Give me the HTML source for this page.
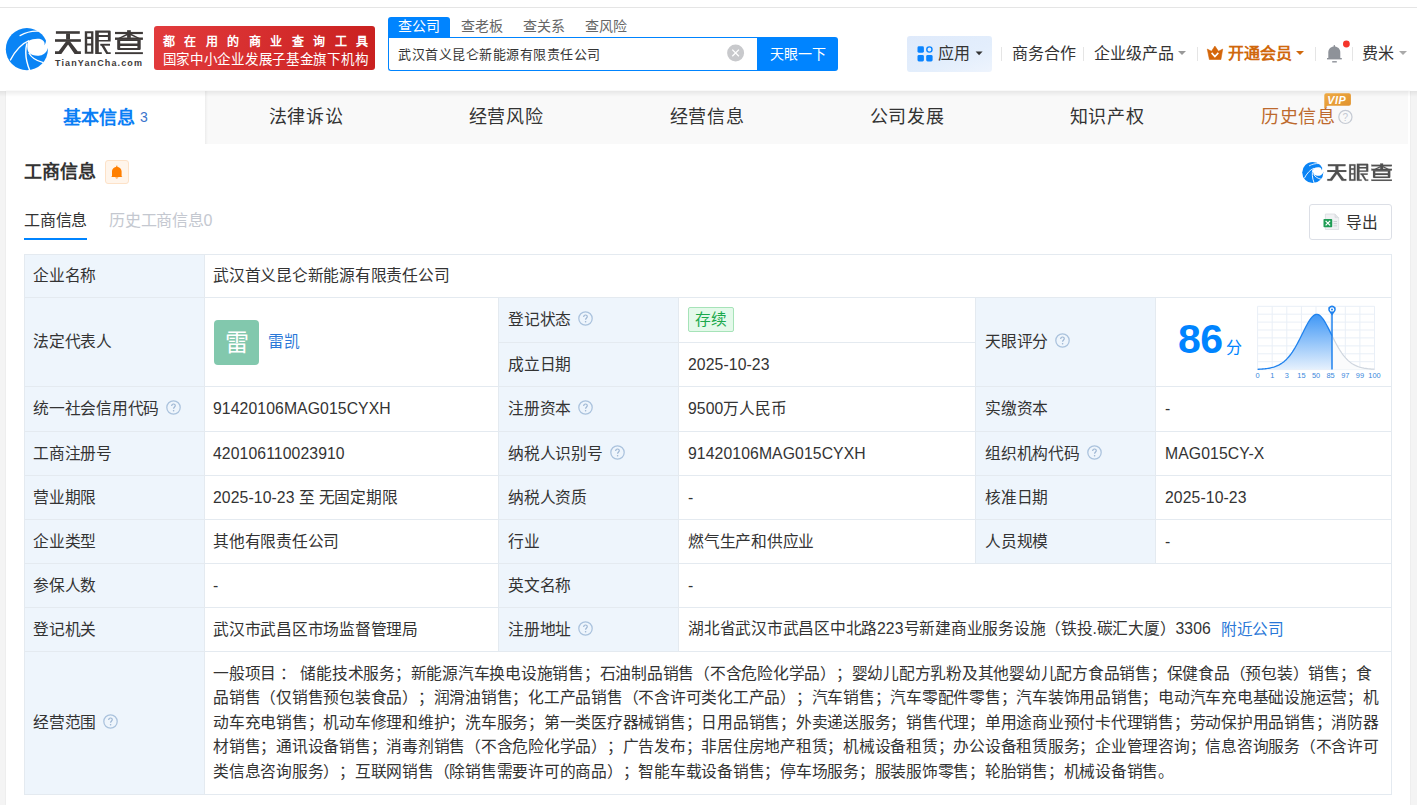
<!DOCTYPE html>
<html lang="zh-CN">
<head>
<meta charset="utf-8">
<style>
*{margin:0;padding:0;box-sizing:border-box;}
html,body{width:1417px;height:805px;overflow:hidden;}
body{background:#f4f4f4;font-family:"Liberation Sans",sans-serif;color:#333;position:relative;text-spacing-trim:space-all;}
.abs{position:absolute;}
.topstrip{left:0;top:0;width:1417px;height:7px;background:#fff;}
.topline{left:0;top:7px;width:1417px;height:1px;background:#e5e5e5;}
.header{left:0;top:8px;width:1417px;height:83px;background:#fff;}
.card{left:6px;top:91px;width:1404px;height:714px;background:#fff;box-shadow:0 0 1.5px rgba(0,0,0,0.10);}
.hshadow{left:0;top:91px;width:1417px;height:6px;background:linear-gradient(rgba(0,0,0,0.07),rgba(0,0,0,0));}
.vshadow{left:205px;top:91px;width:3px;height:53px;background:linear-gradient(90deg,rgba(0,0,0,0.05),rgba(0,0,0,0));}

.logo{left:6px;top:28px;width:42px;height:42px;}
.logotxt{left:54px;top:30px;width:90px;height:38px;}
.banner{left:154px;top:26px;width:221px;height:44px;border-radius:3px;background:linear-gradient(100deg,#e23b3d,#c9201f);color:#fff;}
.banner .l1{position:absolute;left:9px;top:8.5px;font-size:12px;line-height:14px;font-weight:bold;letter-spacing:9.45px;white-space:nowrap;}
.banner .l2{position:absolute;left:8.5px;top:25.5px;font-size:13.5px;line-height:16px;white-space:nowrap;letter-spacing:0.72px;}
.stab{top:17px;height:20px;font-size:14px;line-height:18px;color:#666;white-space:nowrap;}
.stab.on{left:388px;width:62px;background:#0084ff;color:#fff;border-radius:3px 3px 0 0;text-align:center;}
.search{left:388px;top:37px;width:370px;height:34px;border:1px solid #0084ff;border-right:none;border-radius:0 0 0 3px;background:#fff;}
.search .q{position:absolute;left:9px;top:8px;font-size:13px;letter-spacing:0.5px;line-height:18px;color:#333;white-space:nowrap;}
.clear{left:727px;top:44px;width:17px;height:17px;border-radius:50%;background:#c8c9cc;}
.sbtn{left:757px;top:37px;width:81px;height:34px;background:#0084ff;border-radius:0 3px 3px 0;color:#fff;font-size:14px;line-height:34px;text-align:center;}
.appbtn{left:907px;top:36px;width:85px;height:36px;background:linear-gradient(160deg,#dfeafb 0%,#e3eefc 60%,#eef4fd 100%);border-radius:3px;}
.nav{font-size:16px;line-height:20px;color:#333;white-space:nowrap;top:44px;}
.sep{width:1px;height:14px;top:47px;background:#e5e5e5;}
.tri{width:0;height:0;border-left:4px solid transparent;border-right:4px solid transparent;border-top:4px solid #999;}

.tabs{left:6px;top:91px;width:1402px;height:53px;background:#f9f9f9;}
.tab{top:91px;height:53px;width:200px;font-size:18px;line-height:53px;text-align:center;color:#333;white-space:nowrap;letter-spacing:0.6px;}
.tab.on{left:6px;width:199px;background:#fff;color:#0a7ef5;font-weight:bold;}
.h2{left:24px;top:160px;font-size:18px;line-height:24px;font-weight:bold;color:#333;white-space:nowrap;}
.bellbox{left:105px;top:160px;width:24px;height:24px;background:#fff5eb;border:1px solid #fde2c8;border-radius:3px;}
.subtab{top:210px;font-size:16px;line-height:22px;white-space:nowrap;letter-spacing:-0.25px;}
.subline{left:24px;top:238px;width:63px;height:2px;background:#0084ff;}
.expbtn{left:1309px;top:204px;width:83px;height:36px;border:1px solid #dcdfe6;border-radius:3px;background:#fff;}
.exptxt{left:1345.5px;top:212px;font-size:15.75px;line-height:22px;color:#333;white-space:nowrap;}
table.info{position:absolute;left:24px;top:254px;width:1367px;border-collapse:collapse;table-layout:fixed;}
table.info td{border:1px solid #e4eaf0;font-size:15.75px;letter-spacing:-0.25px;line-height:22px;color:#333;padding:0 9px 0 8px;vertical-align:middle;white-space:nowrap;}
table.info td.k{background:#eef5fc;}
table.info td.r{padding-left:9px;}
.qm{display:inline-block;width:15px;height:15px;vertical-align:-1px;margin-left:7px;}

.avatar{display:inline-block;width:45px;height:45px;border-radius:4px;background:#82c8ad;color:#fff;font-size:24px;line-height:45px;text-align:center;vertical-align:middle;}
.lnk{color:#2a78d8;}
.lat{letter-spacing:0.1px;}
td .lnk{margin-left:9px;vertical-align:middle;}
.avatar{margin-left:1px;}
.tag{display:inline-block;height:25px;padding:0 6px;background:#e4f9ea;border:1px solid #a6e3b8;color:#1ba94c;border-radius:2px;font-size:15.75px;line-height:23px;position:relative;top:-1px;}
td.scope div{line-height:24.6px;}
.score{left:1178px;top:317px;font-size:41px;line-height:44px;font-weight:bold;color:#0084ff;white-space:nowrap;letter-spacing:-0.5px;}
.score span{font-size:16px;font-weight:normal;margin-left:3px;letter-spacing:0;}
</style>
</head>
<body>
<div class="abs topstrip"></div>
<div class="abs topline"></div>
<div class="abs header"></div>
<div class="abs card"></div>

<svg class="abs" style="left:5px;top:27px;width:44px;height:44px" viewBox="0 0 805 805">
  <circle cx="400" cy="405" r="385" fill="#0a84f5"/>
  <path d="M425,258 C520,212 650,196 705,255 C728,282 730,312 716,336 C740,312 752,275 748,228 L830,228 L830,378 L787,378 C770,450 720,508 640,522 C560,534 482,512 440,470 C398,420 400,320 425,258 Z" fill="#fff"/>
  <path d="M275,158 C380,100 500,70 610,78" stroke="#fff" stroke-width="22" fill="none" stroke-linecap="round"/>
  <path d="M95,610 C180,450 290,310 440,250" stroke="#fff" stroke-width="24" fill="none"/>
  <path d="M400,300 C370,420 370,600 455,800" stroke="#fff" stroke-width="26" fill="none"/>
  <path d="M435,470 C480,560 580,620 700,650" stroke="#fff" stroke-width="24" fill="none"/>
</svg>
<svg class="abs" style="left:48px;top:24px;width:100px;height:50px" viewBox="48 24 100 50">
<g fill="#3e3a39">
<rect x="55.9" y="31.2" width="23.9" height="2.6"/>
<rect x="55" y="39.2" width="25.9" height="2.6"/>
<rect x="66.1" y="33.5" width="3.9" height="6"/>
<polygon points="66,41.6 70.3,41.6 61.3,53.9 55,53.9 55,51.3 58.7,51.3"/>
<polygon points="66,41.6 70.1,41.6 77.7,51.3 80.9,51.3 80.9,53.9 74.6,53.9"/>
<path d="M84.8,31.2 H93.4 V53.7 H84.8 Z M87.2,33.2 V36.8 H91.1 V33.2 Z M87.2,38.9 V43.4 H91.1 V38.9 Z M87.2,45.4 V51.7 H91.1 V45.4 Z" fill-rule="evenodd"/>
<path d="M95.2,30.4 H109.5 Q110.7,30.4 110.7,31.6 V41.4 H98.8 V52.2 H101.8 V53.9 H95.2 Z M98.8,32.8 V35.1 H107.9 V32.8 Z M98.8,36.9 V39.9 H107.9 V36.9 Z" fill-rule="evenodd"/>
<rect x="100.3" y="43.8" width="9.7" height="1.9"/>
<polygon points="100.6,44.5 103.5,44.5 108,52.2 110.7,52.2 110.7,53.9 106.3,53.9"/>
<rect x="115" y="31.9" width="27.9" height="2.2"/>
<rect x="127.1" y="30.2" width="3.7" height="7.7"/>
<polygon points="127.2,33.6 129.2,34.6 120.2,38.6 117.4,38.6"/>
<polygon points="130.8,33.6 128.8,34.6 137.8,38.6 140.6,38.6"/>
<rect x="115" y="37.5" width="27.9" height="2.4"/>
<path d="M117.2,39.5 H140.7 V48.8 Q140.7,50 139.5,50 H118.4 Q117.2,50 117.2,48.8 Z M120.2,41 V43.6 H137.4 V41 Z M120.2,45.9 V47.9 H137.4 V45.9 Z" fill-rule="evenodd"/>
<rect x="115" y="52.2" width="27.9" height="1.9"/>
</g>
<text x="55" y="66.4" font-family="Liberation Sans, sans-serif" font-weight="bold" font-size="9" letter-spacing="1.12" fill="#3e3a39">TianYanCha.com</text>
</svg>
<div class="abs banner"><div class="l1">都在用的商业查询工具</div><div class="l2">国家中小企业发展子基金旗下机构</div></div>
<div class="abs stab on">查公司</div>
<div class="abs stab" style="left:461px">查老板</div>
<div class="abs stab" style="left:523px">查关系</div>
<div class="abs stab" style="left:585px">查风险</div>
<div class="abs search"><div class="q">武汉首义昆仑新能源有限责任公司</div></div>

<div class="abs sbtn">天眼一下</div>
<div class="abs appbtn"></div>
<div class="abs nav" style="left:938px">应用</div>
<svg class="abs" style="left:900px;top:35px;width:517px;height:40px" viewBox="900 35 517 40">
<g fill="#0a84ff">
<rect x="917.5" y="46.3" width="6.4" height="6.4" rx="1.4"/>
<rect x="917.5" y="55.1" width="6.4" height="6.4" rx="1.4"/>
<rect x="926.2" y="55.1" width="6.4" height="6.4" rx="1.4"/>
</g>
<circle cx="929.4" cy="49.5" r="2.6" fill="none" stroke="#0a84ff" stroke-width="1.4"/>
<path d="M982.6,51.6 L975.6,51.6 L979.1,55.3 Z" fill="#333"/>
<path d="M1207.3,49.1 L1211.5,51.3 L1214.9,46.1 L1218.5,51.3 L1222.7,49.1 L1220.9,59.5 L1209.4,59.5 Z" fill="#d4660a" stroke="#d4660a" stroke-width="0.6" stroke-linejoin="round"/>
<path d="M1211.6,52.9 L1214.9,56.6 L1218.3,52.9" fill="none" stroke="#fff" stroke-width="1.6"/>
<path d="M1328.3,58.1 L1328.3,52.5 C1328.3,48.8 1331,46.6 1334.3,46.6 C1337.6,46.6 1340.3,48.8 1340.3,52.5 L1340.3,58.1 Z" fill="#8e9299"/>
<rect x="1327" y="58" width="14.8" height="1.4" fill="#8e9299"/>
<rect x="1333.7" y="45.1" width="1.3" height="2" fill="#8e9299"/>
<rect x="1332.2" y="61.1" width="4.6" height="1.4" fill="#8e9299"/>
<circle cx="1346.4" cy="44" r="3.4" fill="#f5352b"/>
</svg>
<svg class="abs" style="left:720px;top:37px;width:30px;height:32px" viewBox="720 37 30 32">
<circle cx="735.6" cy="52.9" r="8.5" fill="#c8c9cc"/>
<path d="M732.3,49.6 L738.9,56.2 M738.9,49.6 L732.3,56.2" stroke="#fff" stroke-width="1.3"/>
</svg>
<div class="abs sep" style="left:1001px"></div>
<div class="abs nav" style="left:1012px">商务合作</div>
<div class="abs sep" style="left:1083px"></div>
<div class="abs nav" style="left:1094px">企业级产品</div>
<div class="abs tri" style="left:1178px;top:51px"></div>
<div class="abs sep" style="left:1197px"></div>
<div class="abs nav" style="left:1228px;color:#d0680c;font-weight:bold">开通会员</div>
<div class="abs tri" style="left:1296px;top:51px;border-top-color:#d0680c"></div>
<div class="abs sep" style="left:1315px"></div>
<div class="abs sep" style="left:1352px"></div>
<div class="abs nav" style="left:1362px">费米</div>
<div class="abs tri" style="left:1399px;top:51px;border-top-color:#aaa"></div>

<div class="abs tabs"></div>
<div class="abs tab on" style="letter-spacing:0">基本信息<span style="font-size:14px;font-weight:normal;margin-left:5px;vertical-align:2px;color:#3a74cc">3</span></div>
<div class="abs tab" style="left:206px">法律诉讼</div>
<div class="abs tab" style="left:406px">经营风险</div>
<div class="abs tab" style="left:607px">经营信息</div>
<div class="abs tab" style="left:807px">公司发展</div>
<div class="abs tab" style="left:1007px">知识产权</div>
<div class="abs tab" style="left:1207px;color:#bd6a2e;text-align:left;padding-left:54px">历史信息</div>
<div class="abs hshadow"></div>
<div class="abs vshadow"></div>
<div class="abs h2">工商信息</div>
<div class="abs bellbox"></div>
<svg class="abs" style="left:1320px;top:90px;width:40px;height:40px" viewBox="1320 90 40 40">
<defs><linearGradient id="vipg" x1="0" y1="0" x2="1" y2="1"><stop offset="0" stop-color="#eeaa45"/><stop offset="1" stop-color="#e0902a"/></linearGradient></defs>
<path d="M1326.3,93.2 H1348.9 Q1350.9,93.2 1350.9,95.2 V103.8 Q1350.9,105.8 1348.9,105.8 H1327.6 L1324.3,108.6 V95.2 Q1324.3,93.2 1326.3,93.2 Z" fill="url(#vipg)"/>
<text x="1327.2" y="103.8" font-family="Liberation Sans, sans-serif" font-weight="bold" font-style="italic" font-size="10.8" letter-spacing="0.6" fill="#fff">VIP</text>
<circle cx="1345.4" cy="116.9" r="6.6" fill="none" stroke="#c5cad3" stroke-width="1.2"/>
<text x="1345.4" y="120.6" text-anchor="middle" font-family="Liberation Sans, sans-serif" font-size="10" fill="#c5cad3">?</text>
</svg>
<svg class="abs" style="left:105px;top:160px;width:24px;height:25px" viewBox="105 160 24 25">
<path d="M112,176.2 L112,171.6 C112,168.9 114.1,167 116.8,167 C119.5,167 121.6,168.9 121.6,171.6 L121.6,176.2 L122.5,177.1 L111.1,177.1 Z" fill="#ff7f00"/>
<rect x="116.2" y="165.7" width="1.2" height="1.5" fill="#ff7f00"/>
<path d="M115.1,177.6 Q116.8,179.3 118.5,177.6 Z" fill="#ff7f00"/>
</svg>

<div class="abs subtab" style="left:24px;color:#333">工商信息</div>
<div class="abs subtab" style="left:109px;color:#c4c8d0">历史工商信息0</div>
<div class="abs subline"></div>
<div class="abs expbtn"></div>
<svg class="abs" style="left:1298px;top:158px;width:100px;height:30px" viewBox="1298 158 100 30">
<svg x="1301.8" y="161.4" width="22.1" height="22.1" viewBox="0 0 805 805">
  <circle cx="400" cy="405" r="385" fill="#0a84f5"/>
  <path d="M425,258 C520,212 650,196 705,255 C728,282 730,312 716,336 C740,312 752,275 748,228 L830,228 L830,378 L787,378 C770,450 720,508 640,522 C560,534 482,512 440,470 C398,420 400,320 425,258 Z" fill="#fff"/>
  <path d="M275,158 C380,100 500,70 610,78" stroke="#fff" stroke-width="30" fill="none" stroke-linecap="round"/>
  <path d="M95,610 C180,450 290,310 440,250" stroke="#fff" stroke-width="32" fill="none"/>
  <path d="M400,300 C370,420 370,600 455,800" stroke="#fff" stroke-width="34" fill="none"/>
  <path d="M435,470 C480,560 580,620 700,650" stroke="#fff" stroke-width="32" fill="none"/>
</svg>
<g transform="translate(1327.3,163.5) scale(0.735,0.73) translate(-55,-30.2)" stroke="#505050" stroke-width="0.2"><g fill="#505050">
<rect x="55.9" y="31.2" width="23.9" height="2.6"/>
<rect x="55" y="39.2" width="25.9" height="2.6"/>
<rect x="66.1" y="33.5" width="3.9" height="6"/>
<polygon points="66,41.6 70.3,41.6 61.3,53.9 55,53.9 55,51.3 58.7,51.3"/>
<polygon points="66,41.6 70.1,41.6 77.7,51.3 80.9,51.3 80.9,53.9 74.6,53.9"/>
<path d="M84.8,31.2 H93.4 V53.7 H84.8 Z M87.2,33.2 V36.8 H91.1 V33.2 Z M87.2,38.9 V43.4 H91.1 V38.9 Z M87.2,45.4 V51.7 H91.1 V45.4 Z" fill-rule="evenodd"/>
<path d="M95.2,30.4 H109.5 Q110.7,30.4 110.7,31.6 V41.4 H98.8 V52.2 H101.8 V53.9 H95.2 Z M98.8,32.8 V35.1 H107.9 V32.8 Z M98.8,36.9 V39.9 H107.9 V36.9 Z" fill-rule="evenodd"/>
<rect x="100.3" y="43.8" width="9.7" height="1.9"/>
<polygon points="100.6,44.5 103.5,44.5 108,52.2 110.7,52.2 110.7,53.9 106.3,53.9"/>
<rect x="115" y="31.9" width="27.9" height="2.2"/>
<rect x="127.1" y="30.2" width="3.7" height="7.7"/>
<polygon points="127.2,33.6 129.2,34.6 120.2,38.6 117.4,38.6"/>
<polygon points="130.8,33.6 128.8,34.6 137.8,38.6 140.6,38.6"/>
<rect x="115" y="37.5" width="27.9" height="2.4"/>
<path d="M117.2,39.5 H140.7 V48.8 Q140.7,50 139.5,50 H118.4 Q117.2,50 117.2,48.8 Z M120.2,41 V43.6 H137.4 V41 Z M120.2,45.9 V47.9 H137.4 V45.9 Z" fill-rule="evenodd"/>
<rect x="115" y="52.2" width="27.9" height="1.9"/>
</g></g>
</svg>
<svg class="abs" style="left:1320px;top:210px;width:22px;height:24px" viewBox="1320 210 22 24">
<path d="M1325.4,214 H1335 L1338.7,217.7 V229.5 H1325.4 Z" fill="#f0f1f3" stroke="#d9dce0" stroke-width="0.8"/>
<path d="M1335,214 V217.7 H1338.7" fill="#e1e3e6" stroke="#d9dce0" stroke-width="0.8"/>
<rect x="1333.5" y="221" width="3.5" height="0.9" fill="#c8ccd2"/>
<rect x="1333.5" y="223.2" width="3.5" height="0.9" fill="#c8ccd2"/>
<rect x="1333.5" y="225.4" width="3.5" height="0.9" fill="#c8ccd2"/>
<rect x="1323.5" y="219" width="8.7" height="8.2" rx="0.8" fill="#1f9d55"/>
<path d="M1325.6,220.9 L1330.1,225.4 M1330.1,220.9 L1325.6,225.4" stroke="#fff" stroke-width="1.3"/>
</svg>
<div class="abs exptxt">导出</div>
<table class="info">
<colgroup><col style="width:180px"><col style="width:294px"><col style="width:180px"><col style="width:297px"><col style="width:180px"><col style="width:236px"></colgroup>
<tr style="height:43px"><td class="k">企业名称</td><td colspan="5">武汉首义昆仑新能源有限责任公司</td></tr>
<tr style="height:45px"><td class="k" rowspan="2">法定代表人</td><td rowspan="2"><span class="avatar">雷</span><span class="lnk">雷凯</span></td><td class="r k">登记状态<svg class="qm" viewBox="0 0 15 15"><circle cx="7.5" cy="7.5" r="6.7" fill="none" stroke="#aac2dd" stroke-width="1.25"/><path d="M5.7,6 C5.7,4.7 6.5,4 7.5,4 C8.5,4 9.3,4.7 9.3,5.7 C9.3,6.9 7.6,7.1 7.6,8.7" fill="none" stroke="#9cb5d2" stroke-width="1.15"/><circle cx="7.6" cy="10.7" r="0.8" fill="#9cb5d2"/></svg></td><td class="r"><span class="tag">存续</span></td><td class="r k" rowspan="2">天眼评分<svg class="qm" viewBox="0 0 15 15"><circle cx="7.5" cy="7.5" r="6.7" fill="none" stroke="#aac2dd" stroke-width="1.25"/><path d="M5.7,6 C5.7,4.7 6.5,4 7.5,4 C8.5,4 9.3,4.7 9.3,5.7 C9.3,6.9 7.6,7.1 7.6,8.7" fill="none" stroke="#9cb5d2" stroke-width="1.15"/><circle cx="7.6" cy="10.7" r="0.8" fill="#9cb5d2"/></svg></td><td rowspan="2" class="r"></td></tr>
<tr style="height:44px"><td class="r k">成立日期</td><td class="r"><span class="lat">2025-10-23</span></td></tr>
<tr style="height:45px"><td class="k">统一社会信用代码<svg class="qm" viewBox="0 0 15 15"><circle cx="7.5" cy="7.5" r="6.7" fill="none" stroke="#aac2dd" stroke-width="1.25"/><path d="M5.7,6 C5.7,4.7 6.5,4 7.5,4 C8.5,4 9.3,4.7 9.3,5.7 C9.3,6.9 7.6,7.1 7.6,8.7" fill="none" stroke="#9cb5d2" stroke-width="1.15"/><circle cx="7.6" cy="10.7" r="0.8" fill="#9cb5d2"/></svg></td><td><span class="lat">91420106MAG015CYXH</span></td><td class="r k">注册资本<svg class="qm" viewBox="0 0 15 15"><circle cx="7.5" cy="7.5" r="6.7" fill="none" stroke="#aac2dd" stroke-width="1.25"/><path d="M5.7,6 C5.7,4.7 6.5,4 7.5,4 C8.5,4 9.3,4.7 9.3,5.7 C9.3,6.9 7.6,7.1 7.6,8.7" fill="none" stroke="#9cb5d2" stroke-width="1.15"/><circle cx="7.6" cy="10.7" r="0.8" fill="#9cb5d2"/></svg></td><td class="r"><span class="lat">9500</span>万人民币</td><td class="r k">实缴资本</td><td class="r">-</td></tr>
<tr style="height:44px"><td class="k">工商注册号</td><td><span class="lat">420106110023910</span></td><td class="r k">纳税人识别号<svg class="qm" viewBox="0 0 15 15"><circle cx="7.5" cy="7.5" r="6.7" fill="none" stroke="#aac2dd" stroke-width="1.25"/><path d="M5.7,6 C5.7,4.7 6.5,4 7.5,4 C8.5,4 9.3,4.7 9.3,5.7 C9.3,6.9 7.6,7.1 7.6,8.7" fill="none" stroke="#9cb5d2" stroke-width="1.15"/><circle cx="7.6" cy="10.7" r="0.8" fill="#9cb5d2"/></svg></td><td class="r"><span class="lat">91420106MAG015CYXH</span></td><td class="r k">组织机构代码<svg class="qm" viewBox="0 0 15 15"><circle cx="7.5" cy="7.5" r="6.7" fill="none" stroke="#aac2dd" stroke-width="1.25"/><path d="M5.7,6 C5.7,4.7 6.5,4 7.5,4 C8.5,4 9.3,4.7 9.3,5.7 C9.3,6.9 7.6,7.1 7.6,8.7" fill="none" stroke="#9cb5d2" stroke-width="1.15"/><circle cx="7.6" cy="10.7" r="0.8" fill="#9cb5d2"/></svg></td><td class="r"><span class="lat">MAG015CY-X</span></td></tr>
<tr style="height:44px"><td class="k">营业期限</td><td><span class="lat">2025-10-23</span> 至 无固定期限</td><td class="r k">纳税人资质</td><td class="r">-</td><td class="r k">核准日期</td><td class="r"><span class="lat">2025-10-23</span></td></tr>
<tr style="height:44px"><td class="k">企业类型</td><td>其他有限责任公司</td><td class="r k">行业</td><td class="r">燃气生产和供应业</td><td class="r k">人员规模</td><td class="r">-</td></tr>
<tr style="height:44px"><td class="k">参保人数</td><td>-</td><td class="r k">英文名称</td><td colspan="3" class="r">-</td></tr>
<tr style="height:44px"><td class="k">登记机关</td><td>武汉市武昌区市场监督管理局</td><td class="r k">注册地址<svg class="qm" viewBox="0 0 15 15"><circle cx="7.5" cy="7.5" r="6.7" fill="none" stroke="#aac2dd" stroke-width="1.25"/><path d="M5.7,6 C5.7,4.7 6.5,4 7.5,4 C8.5,4 9.3,4.7 9.3,5.7 C9.3,6.9 7.6,7.1 7.6,8.7" fill="none" stroke="#9cb5d2" stroke-width="1.15"/><circle cx="7.6" cy="10.7" r="0.8" fill="#9cb5d2"/></svg></td><td colspan="3" class="r">湖北省武汉市武昌区中北路<span class="lat">223</span>号新建商业服务设施（铁投.碳汇大厦）<span class="lat">3306</span><span class="lnk" style="margin-left:10px">附近公司</span></td></tr>
<tr style="height:143px"><td class="k">经营范围<svg class="qm" viewBox="0 0 15 15"><circle cx="7.5" cy="7.5" r="6.7" fill="none" stroke="#aac2dd" stroke-width="1.25"/><path d="M5.7,6 C5.7,4.7 6.5,4 7.5,4 C8.5,4 9.3,4.7 9.3,5.7 C9.3,6.9 7.6,7.1 7.6,8.7" fill="none" stroke="#9cb5d2" stroke-width="1.15"/><circle cx="7.6" cy="10.7" r="0.8" fill="#9cb5d2"/></svg></td><td colspan="5" class="scope"><div>一般项目<span style="position:relative;left:4px">：</span><span style="display:inline-block;width:8.5px"></span>储能技术服务；新能源汽车换电设施销售；石油制品销售（不含危险化学品）；婴幼儿配方乳粉及其他婴幼儿配方食品销售；保健食品（预包装）销售；食</div><div>品销售（仅销售预包装食品）；润滑油销售；化工产品销售（不含许可类化工产品）；汽车销售；汽车零配件零售；汽车装饰用品销售；电动汽车充电基础设施运营；机</div><div>动车充电销售；机动车修理和维护；洗车服务；第一类医疗器械销售；日用品销售；外卖递送服务；销售代理；单用途商业预付卡代理销售；劳动保护用品销售；消防器</div><div>材销售；通讯设备销售；消毒剂销售（不含危险化学品）；广告发布；非居住房地产租赁；机械设备租赁；办公设备租赁服务；企业管理咨询；信息咨询服务（不含许可</div><div>类信息咨询服务）；互联网销售（除销售需要许可的商品）；智能车载设备销售；停车场服务；服装服饰零售；轮胎销售；机械设备销售。</div></td></tr>
</table>
<svg class="abs" style="left:1250px;top:300px;width:135px;height:82px" viewBox="1250 300 135 82">
<defs><linearGradient id="gf" x1="0" y1="0" x2="0" y2="1"><stop offset="0" stop-color="#3f97f6"/><stop offset="1" stop-color="#e6f1fd"/></linearGradient></defs>
<g stroke="#e9eff7" stroke-width="1" fill="none"><line x1="1257.6" y1="306.3" x2="1257.6" y2="369.6"/><line x1="1272.2" y1="306.3" x2="1272.2" y2="369.6"/><line x1="1286.8" y1="306.3" x2="1286.8" y2="369.6"/><line x1="1301.4" y1="306.3" x2="1301.4" y2="369.6"/><line x1="1316.0" y1="306.3" x2="1316.0" y2="369.6"/><line x1="1330.6" y1="306.3" x2="1330.6" y2="369.6"/><line x1="1345.3" y1="306.3" x2="1345.3" y2="369.6"/><line x1="1359.9" y1="306.3" x2="1359.9" y2="369.6"/><line x1="1374.5" y1="306.3" x2="1374.5" y2="369.6"/><line x1="1257.6" y1="306.3" x2="1374.5" y2="306.3"/><line x1="1257.6" y1="314.2" x2="1374.5" y2="314.2"/><line x1="1257.6" y1="322.1" x2="1374.5" y2="322.1"/><line x1="1257.6" y1="330.0" x2="1374.5" y2="330.0"/><line x1="1257.6" y1="337.9" x2="1374.5" y2="337.9"/><line x1="1257.6" y1="345.9" x2="1374.5" y2="345.9"/><line x1="1257.6" y1="353.8" x2="1374.5" y2="353.8"/><line x1="1257.6" y1="361.7" x2="1374.5" y2="361.7"/><line x1="1257.6" y1="369.6" x2="1374.5" y2="369.6"/></g>
<path d="M1332.00,335.64 L1333.06,337.78 L1334.12,339.89 L1335.19,341.95 L1336.25,343.95 L1337.31,345.89 L1338.38,347.74 L1339.44,349.51 L1340.50,351.19 L1341.56,352.78 L1342.62,354.27 L1343.69,355.66 L1344.75,356.97 L1345.81,358.18 L1346.88,359.29 L1347.94,360.33 L1349.00,361.27 L1350.06,362.14 L1351.12,362.93 L1352.19,363.65 L1353.25,364.30 L1354.31,364.89 L1355.38,365.42 L1356.44,365.90 L1357.50,366.33 L1358.56,366.72 L1359.62,367.06 L1360.69,367.37 L1361.75,367.64 L1362.81,367.88 L1363.88,368.10 L1364.94,368.29 L1366.00,368.45 L1367.06,368.60 L1368.12,368.73 L1369.19,368.84 L1370.25,368.94 L1371.31,369.03 L1372.38,369.11 L1373.44,369.17 L1374.50,369.23 L1374.5,369.6 L1332,369.6 Z" fill="#fafbfc" stroke="none"/>
<path d="M1332.00,335.64 L1333.06,337.78 L1334.12,339.89 L1335.19,341.95 L1336.25,343.95 L1337.31,345.89 L1338.38,347.74 L1339.44,349.51 L1340.50,351.19 L1341.56,352.78 L1342.62,354.27 L1343.69,355.66 L1344.75,356.97 L1345.81,358.18 L1346.88,359.29 L1347.94,360.33 L1349.00,361.27 L1350.06,362.14 L1351.12,362.93 L1352.19,363.65 L1353.25,364.30 L1354.31,364.89 L1355.38,365.42 L1356.44,365.90 L1357.50,366.33 L1358.56,366.72 L1359.62,367.06 L1360.69,367.37 L1361.75,367.64 L1362.81,367.88 L1363.88,368.10 L1364.94,368.29 L1366.00,368.45 L1367.06,368.60 L1368.12,368.73 L1369.19,368.84 L1370.25,368.94 L1371.31,369.03 L1372.38,369.11 L1373.44,369.17 L1374.50,369.23" fill="none" stroke="#cfd6df" stroke-width="1.2"/>
<path d="M1257.60,369.29 L1258.84,369.23 L1260.08,369.17 L1261.32,369.09 L1262.56,368.99 L1263.80,368.88 L1265.04,368.76 L1266.28,368.61 L1267.52,368.44 L1268.76,368.24 L1270.00,368.01 L1271.24,367.74 L1272.48,367.43 L1273.72,367.08 L1274.96,366.68 L1276.20,366.22 L1277.44,365.69 L1278.68,365.10 L1279.92,364.43 L1281.16,363.68 L1282.40,362.84 L1283.64,361.90 L1284.88,360.85 L1286.12,359.70 L1287.36,358.42 L1288.60,357.03 L1289.84,355.50 L1291.08,353.85 L1292.32,352.07 L1293.56,350.16 L1294.80,348.12 L1296.04,345.97 L1297.28,343.71 L1298.52,341.36 L1299.76,338.93 L1301.00,336.45 L1302.24,333.93 L1303.48,331.42 L1304.72,328.93 L1305.96,326.52 L1307.20,324.21 L1308.44,322.04 L1309.68,320.07 L1310.92,318.32 L1312.16,316.84 L1313.40,315.67 L1314.64,314.85 L1315.88,314.39 L1317.12,314.32 L1318.36,314.66 L1319.60,315.37 L1320.84,316.43 L1322.08,317.81 L1323.32,319.48 L1324.56,321.38 L1325.80,323.49 L1327.04,325.76 L1328.28,328.15 L1329.52,330.61 L1330.76,333.12 L1332.00,335.64 L1332,369.6 Z" fill="url(#gf)" stroke="none"/>
<path d="M1257.60,369.29 L1258.84,369.23 L1260.08,369.17 L1261.32,369.09 L1262.56,368.99 L1263.80,368.88 L1265.04,368.76 L1266.28,368.61 L1267.52,368.44 L1268.76,368.24 L1270.00,368.01 L1271.24,367.74 L1272.48,367.43 L1273.72,367.08 L1274.96,366.68 L1276.20,366.22 L1277.44,365.69 L1278.68,365.10 L1279.92,364.43 L1281.16,363.68 L1282.40,362.84 L1283.64,361.90 L1284.88,360.85 L1286.12,359.70 L1287.36,358.42 L1288.60,357.03 L1289.84,355.50 L1291.08,353.85 L1292.32,352.07 L1293.56,350.16 L1294.80,348.12 L1296.04,345.97 L1297.28,343.71 L1298.52,341.36 L1299.76,338.93 L1301.00,336.45 L1302.24,333.93 L1303.48,331.42 L1304.72,328.93 L1305.96,326.52 L1307.20,324.21 L1308.44,322.04 L1309.68,320.07 L1310.92,318.32 L1312.16,316.84 L1313.40,315.67 L1314.64,314.85 L1315.88,314.39 L1317.12,314.32 L1318.36,314.66 L1319.60,315.37 L1320.84,316.43 L1322.08,317.81 L1323.32,319.48 L1324.56,321.38 L1325.80,323.49 L1327.04,325.76 L1328.28,328.15 L1329.52,330.61 L1330.76,333.12 L1332.00,335.64" fill="none" stroke="#1f82ee" stroke-width="1.3"/>
<line x1="1332" y1="312" x2="1332" y2="369.6" stroke="#1f82ee" stroke-width="1.5"/>
<path d="M1328.6,311 A3.8,3.8 0 1 1 1335.4,311 L1332,315.5 Z" fill="#1f82ee"/>
<circle cx="1332" cy="309.4" r="2.2" fill="#fff"/><circle cx="1332" cy="309.4" r="1" fill="#1f82ee"/>
<g font-family="Liberation Sans, sans-serif" font-size="7.4" fill="#3a88dc"><text x="1257.6" y="378.3" text-anchor="middle">0</text><text x="1272.2" y="378.3" text-anchor="middle">1</text><text x="1286.8" y="378.3" text-anchor="middle">3</text><text x="1301.4" y="378.3" text-anchor="middle">15</text><text x="1316.0" y="378.3" text-anchor="middle">50</text><text x="1330.6" y="378.3" text-anchor="middle">85</text><text x="1345.3" y="378.3" text-anchor="middle">97</text><text x="1359.9" y="378.3" text-anchor="middle">99</text><text x="1374.5" y="378.3" text-anchor="middle">100</text></g>
</svg>
<div class="abs score">86<span>分</span></div>
</body>
</html>
